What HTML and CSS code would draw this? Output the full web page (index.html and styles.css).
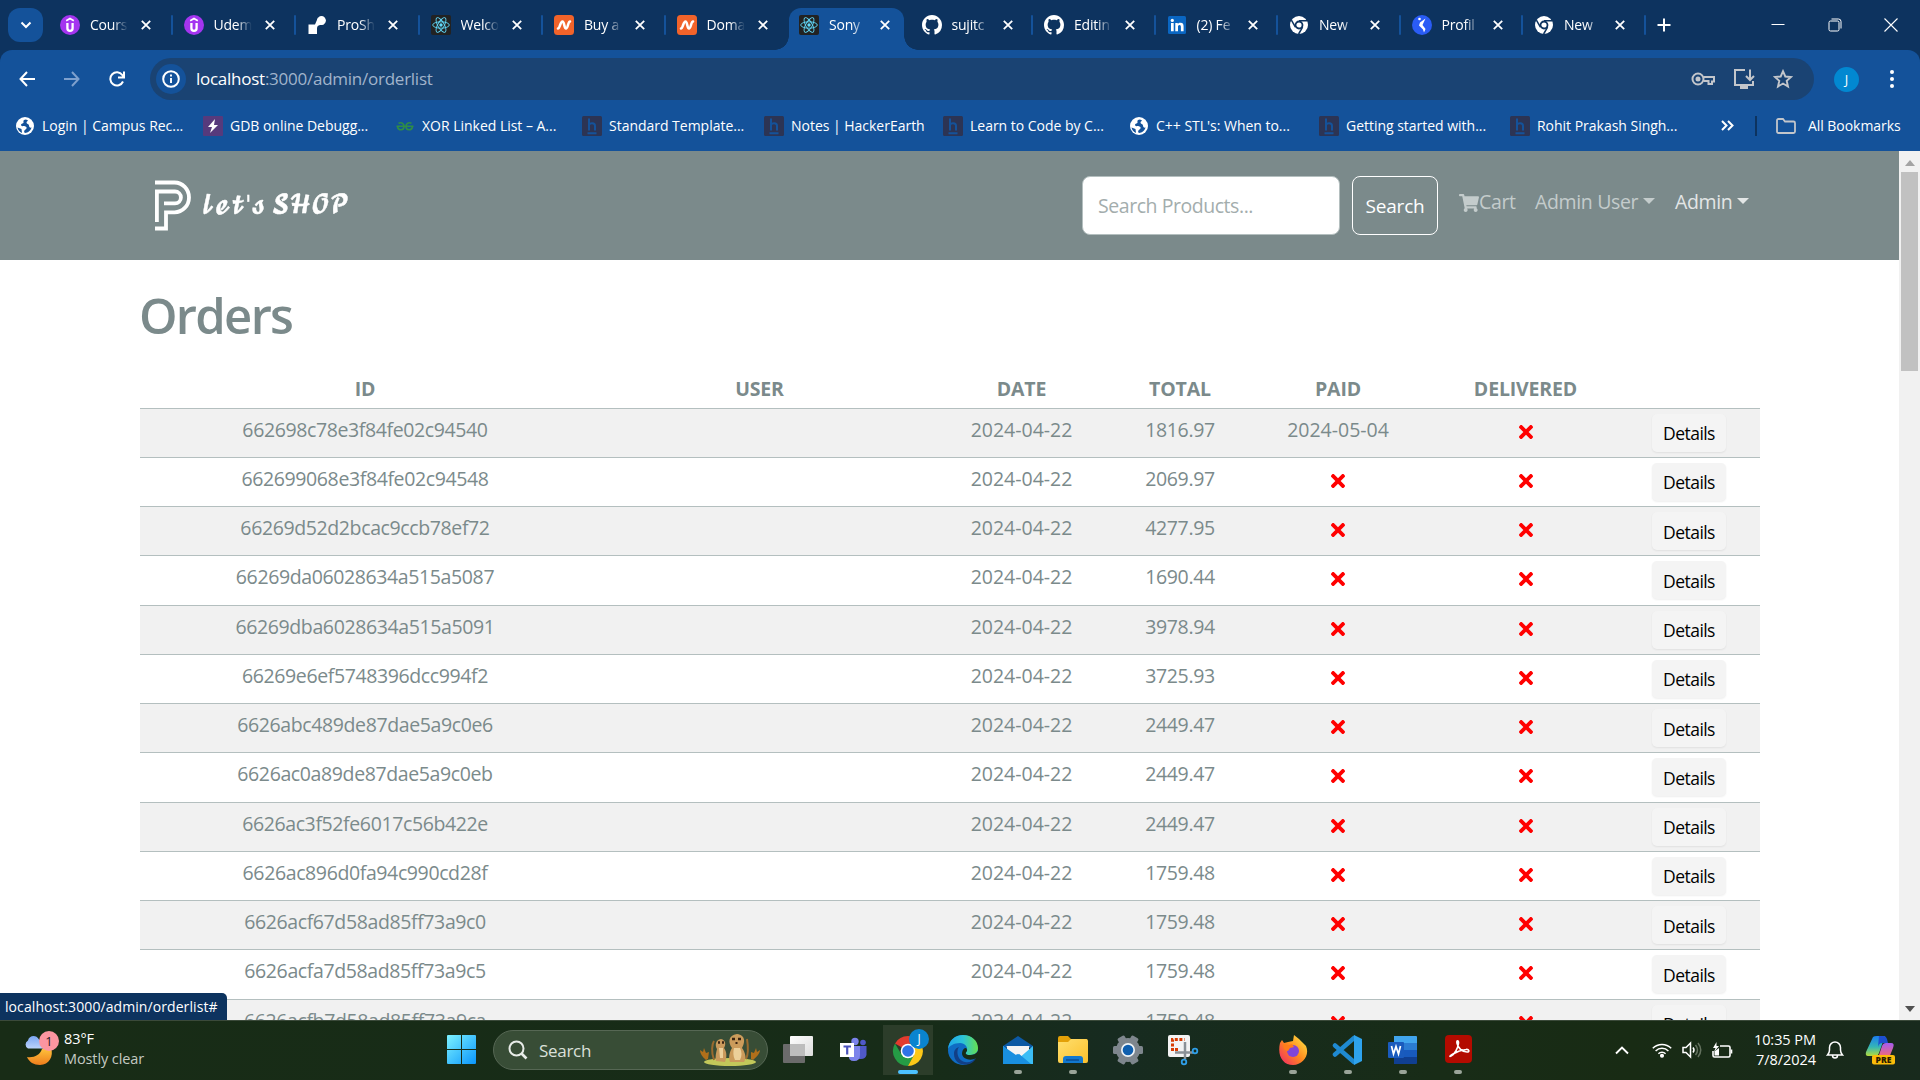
FILE: index.html
```html
<!DOCTYPE html>
<html lang="en">
<head>
<meta charset="utf-8">
<title>Orders</title>
<link rel="stylesheet" href="styles.css">
</head>
<body>
<svg class="defs" width="0" height="0">
  <defs>
    <linearGradient id="g-win" x1="0" y1="0" x2="1" y2="1"><stop offset="0" stop-color="#7df3ff"/><stop offset="1" stop-color="#0a95fb"/></linearGradient>
    <linearGradient id="g-moon" x1="0" y1="0" x2="0" y2="1"><stop offset="0" stop-color="#ffc53d"/><stop offset="1" stop-color="#ee7d1c"/></linearGradient>
    <linearGradient id="g-cloud" x1="0" y1="0" x2="0" y2="1"><stop offset="0" stop-color="#7ba6f2"/><stop offset="1" stop-color="#bcd3fb"/></linearGradient>
    <linearGradient id="g-view" x1="0" y1="0" x2="1" y2="1"><stop offset="0" stop-color="#fff"/><stop offset="1" stop-color="#dcdcdc"/></linearGradient>
    <linearGradient id="g-edge" x1="0" y1="0" x2="1" y2="0"><stop offset="0" stop-color="#1fa7ea"/><stop offset=".5" stop-color="#2cc3d8"/><stop offset="1" stop-color="#66e04e"/></linearGradient>
    <linearGradient id="g-fold" x1="0" y1="0" x2="1" y2="1"><stop offset="0" stop-color="#ffdf6e"/><stop offset="1" stop-color="#fbc02c"/></linearGradient>
    <linearGradient id="g-fox" x1="1" y1="0" x2="0" y2="1"><stop offset="0" stop-color="#fff04a"/><stop offset=".5" stop-color="#ff8a1e"/><stop offset="1" stop-color="#f0206c"/></linearGradient>
    <linearGradient id="g-copl" x1="0" y1="0" x2="0" y2="1"><stop offset="0" stop-color="#1b7df0"/><stop offset=".55" stop-color="#35b6b5"/><stop offset="1" stop-color="#b4dc3a"/></linearGradient>
    <linearGradient id="g-copr" x1="0" y1="0" x2="0" y2="1"><stop offset="0" stop-color="#a45bf0"/><stop offset="1" stop-color="#fb6d6a"/></linearGradient>
  </defs>
  <symbol id="x" viewBox="0 0 10 10"><path d="M.8.8l8.4 8.4M9.2.8L.8 9.2" stroke="#fff" stroke-width="1.8" fill="none"/></symbol>
  <symbol id="udemy" viewBox="0 0 20 20"><circle cx="10" cy="10" r="10" fill="#a435f0"/><path d="M6.2 5.7L10 3.5l3.800 2.200" stroke="#fff" stroke-width="1.700" fill="none"/><path d="M7.400 8v5.200a2.600 2.600 0 0 0 5.200 0V8" stroke="#fff" stroke-width="2.300" fill="none"/></symbol>
  <symbol id="pro" viewBox="0 0 20 20"><circle cx="14.500" cy="5.500" r="4.400" fill="#fff"/><path d="M1.500 9.500h6.500L11 2.500l6 7-4 .5c-2 .3-3 1.500-3 3.500v5.500H1.500z" fill="#fff"/></symbol>
  <symbol id="react" viewBox="0 0 20 20"><rect width="20" height="20" rx="2" fill="#222"/><g fill="none" stroke="#61dafb" stroke-width=".9"><ellipse cx="10" cy="10" rx="8.300" ry="3.200"/><ellipse cx="10" cy="10" rx="8.300" ry="3.200" transform="rotate(60 10 10)"/><ellipse cx="10" cy="10" rx="8.300" ry="3.200" transform="rotate(120 10 10)"/></g><circle cx="10" cy="10" r="1.700" fill="#61dafb"/></symbol>
  <symbol id="cheap" viewBox="0 0 20 20"><rect width="20" height="20" rx="3.500" fill="#f1632a"/><path d="M4 13.500c2 0 2.200-7 4.500-7 2 0 1.500 7 3.500 7S14 6.500 16 6.500" fill="none" stroke="#fff" stroke-width="2.600" stroke-linecap="round"/></symbol>
  <symbol id="github" viewBox="0 0 16 16"><path fill="#fff" d="M8 0C3.580 0 0 3.580 0 8c0 3.540 2.290 6.530 5.470 7.590.4.070.55-.17.55-.38 0-.19-.01-.82-.01-1.490-2.010.37-2.530-.49-2.690-.94-.09-.23-.48-.94-.82-1.130-.28-.15-.68-.52-.01-.53.63-.01 1.080.58 1.230.82.72 1.210 1.870.87 2.330.66.070-.52.28-.87.51-1.070-1.780-.2-3.640-.89-3.640-3.950 0-.87.31-1.590.82-2.150-.08-.2-.36-1.020.08-2.120 0 0 .67-.21 2.200.82.64-.18 1.320-.27 2-.27s1.360.09 2 .27c1.530-1.040 2.200-.82 2.200-.82.44 1.100.16 1.920.08 2.120.51.56.82 1.270.82 2.150 0 3.070-1.870 3.750-3.650 3.950.29.25.54.73.54 1.480 0 1.070-.01 1.930-.01 2.200 0 .21.15.46.55.38A8.010 8.010 0 0 0 16 8c0-4.420-3.580-8-8-8z"/></symbol>
  <symbol id="linkedin" viewBox="0 0 20 20"><rect x="1" y="1" width="18" height="18" rx="1.500" fill="#0a66c2"/><g fill="#fff"><circle cx="5.300" cy="5.400" r="1.600"/><path d="M4 8h2.700v8.200H4zM8.300 8h2.500v1.200c.5-.9 1.500-1.400 2.700-1.400 2.500 0 3.100 1.600 3.100 3.900v4.500h-2.700v-4c0-1.100-.1-2.200-1.400-2.200s-1.500 1-1.500 2.100v4.100H8.300z"/></g></symbol>
  <symbol id="chromew" viewBox="0 0 20 20"><circle cx="10" cy="10" r="9" fill="#fff"/><circle cx="10" cy="10" r="3.500" fill="none" stroke="#0d335f" stroke-width="1.800"/><path d="M10 5.800h8M6.400 12.100L2.400 5.200M13.600 12.100L9.600 19" stroke="#0d335f" stroke-width="1.500"/></symbol>
  <symbol id="prof" viewBox="0 0 20 20"><circle cx="10" cy="10" r="10" fill="#2a5cf5"/><circle cx="7.500" cy="4" r="1.300" fill="#fff"/><path d="M13.500 3.500L8 7.500l-1 3 4 4 1 3 1.500-3.500-3-4z" fill="#fff"/></symbol>
  <symbol id="globe" viewBox="0 0 20 20"><circle cx="10" cy="10" r="9" fill="#fff"/><path d="M11 3.500c-2 0-3 1-2.500 2.500S6 7.500 6 9s3 1 4.500 1.500 1.500 2 0 3-2 2.500-.5 3.500c3-.3 6-2.500 6.500-5.500-1.500.5-2.500-.5-2.500-2S11.500 8 11.500 6.500s1.500-1 1.500-2z M2.500 11.500l4 1.500.5 4c-2.500-1-4-3-4.500-5.500z" fill="#14529a"/></symbol>
  <symbol id="bolt" viewBox="0 0 20 20"><rect width="20" height="20" rx="1" fill="#563a7c"/><path d="M12 3L5 11h4l-2 6 8-8h-4z" fill="#fff"/></symbol>
  <symbol id="gfg" viewBox="0 0 20 20"><path d="M1.500 10.300h17M3.500 7.300C7 5.800 9 8 9 10.500c0 4-5.500 4.500-6.500.5M16.500 7.300C13 5.800 11 8 11 10.500c0 4 5.500 4.500 6.500.5" fill="none" stroke="#2f8d46" stroke-width="1.600"/></symbol>
  <symbol id="he" viewBox="0 0 20 20"><rect width="20" height="20" rx="1.500" fill="#2c3454"/><path d="M7 2.500v12M7 9c.8-2.300 6-2.500 6 .8v4.700M5.500 17.300h9" fill="none" stroke="#14529a" stroke-width="2"/></symbol>
  <symbol id="no" viewBox="0 0 352 352"><path fill="red" d="M242.700 176l100.100-100.100c12.300-12.300 12.300-32.200 0-44.500l-22.200-22.200c-12.300-12.300-32.200-12.300-44.500 0L176 109.300 75.900 9.200c-12.300-12.300-32.200-12.300-44.500 0L9.200 31.500c-12.300 12.300-12.300 32.200 0 44.500L109.300 176 9.200 276.100c-12.300 12.300-12.300 32.200 0 44.500l22.200 22.200c12.300 12.300 32.200 12.300 44.500 0L176 242.700l100.100 100.100c12.300 12.300 32.200 12.300 44.500 0l22.200-22.200c12.300-12.300 12.300-32.200 0-44.500z"/></symbol>
</svg>

<header class="tabstrip">
  <button class="tab-search"><svg width="12" height="8" viewBox="0 0 12 8"><path d="M1.500 1.500L6 6l4.500-4.500" fill="none" stroke="#fff" stroke-width="2"/></svg></button>
  <div class="tabs">
    <div class="tab wide sep"><svg class="fav"><use href="#udemy"/></svg><span>Cours</span><svg class="x"><use href="#x"/></svg></div>
    <div class="tab wide sep"><svg class="fav"><use href="#udemy"/></svg><span>Udem</span><svg class="x"><use href="#x"/></svg></div>
    <div class="tab wide sep"><svg class="fav"><use href="#pro"/></svg><span>ProSh</span><svg class="x"><use href="#x"/></svg></div>
    <div class="tab wide sep"><svg class="fav"><use href="#react"/></svg><span>Welco</span><svg class="x"><use href="#x"/></svg></div>
    <div class="tab sep"><svg class="fav"><use href="#cheap"/></svg><span>Buy a</span><svg class="x"><use href="#x"/></svg></div>
    <div class="tab"><svg class="fav"><use href="#cheap"/></svg><span>Doma</span><svg class="x"><use href="#x"/></svg></div>
    <div class="tab active"><svg class="fav"><use href="#react"/></svg><span>Sony</span><svg class="x"><use href="#x"/></svg></div>
    <div class="tab sep"><svg class="fav"><use href="#github"/></svg><span>sujitc</span><svg class="x"><use href="#x"/></svg></div>
    <div class="tab sep"><svg class="fav"><use href="#github"/></svg><span>Editin</span><svg class="x"><use href="#x"/></svg></div>
    <div class="tab sep"><svg class="fav"><use href="#linkedin"/></svg><span>(2) Fe</span><svg class="x"><use href="#x"/></svg></div>
    <div class="tab sep"><svg class="fav"><use href="#chromew"/></svg><span>New</span><svg class="x"><use href="#x"/></svg></div>
    <div class="tab sep"><svg class="fav"><use href="#prof"/></svg><span>Profil</span><svg class="x"><use href="#x"/></svg></div>
    <div class="tab sep"><svg class="fav"><use href="#chromew"/></svg><span>New</span><svg class="x"><use href="#x"/></svg></div>
  </div>
  <svg class="newtab" width="14" height="14" viewBox="0 0 14 14"><path d="M7 .5v13M.5 7h13" stroke="#fff" stroke-width="2"/></svg>
  <div class="winctl">
    <svg width="14" height="14" viewBox="0 0 14 14"><path d="M.5 6.500h13" stroke="#fff"/></svg>
    <svg width="14" height="14" viewBox="0 0 14 14" fill="none" stroke="#fff"><rect x="1" y="3" width="10" height="10" rx="1.500"/><path d="M3.500 1h7a2.500 2.500 0 0 1 2.500 2.500v7"/></svg>
    <svg width="14" height="14" viewBox="0 0 14 14"><path d="M.5.5l13 13M13.500.5l-13 13" stroke="#fff" stroke-width="1.100"/></svg>
  </div>
</header>

<div class="browserbar">
  <div class="toolbar">
    <div class="navbtns">
      <svg width="16" height="16" viewBox="0 0 16 16" fill="none" stroke="#fff" stroke-width="2"><path d="M8 1L1.500 8 8 15M1.500 8H16"/></svg>
      <svg width="16" height="16" viewBox="0 0 16 16" fill="none" stroke="#7ea0cd" stroke-width="2"><path d="M8 1l6.500 7L8 15M14.500 8H0"/></svg>
      <svg width="16" height="16" viewBox="0 0 16 16" fill="none" stroke="#fff" stroke-width="2"><path d="M14 10.500A6.600 6.600 0 1 1 13.300 4L14.500 6M15 .5V6.500H9"/></svg>
    </div>
    <div class="omnibox">
      <div class="info"><svg width="18" height="18" viewBox="0 0 18 18"><circle cx="9" cy="9" r="7.800" fill="none" stroke="#fff" stroke-width="2"/><path d="M9 8v5M9 4.500v2" stroke="#fff" stroke-width="1.900"/></svg></div>
      <span class="url"><b>localhost</b>:3000/admin/orderlist</span>
      <div class="omni-icons">
        <svg width="24" height="16" viewBox="0 0 24 16" fill="none" stroke="#c3c6cb" stroke-width="2"><circle cx="7" cy="8" r="5.500"/><path d="M12.500 6H23v4.500h-2V13h-3.500v-3h-5"/><circle cx="7" cy="8" r="1.500" fill="#c3c6cb"/></svg>
        <svg width="22" height="22" viewBox="0 0 22 22" fill="none" stroke="#c3c6cb" stroke-width="2"><path d="M12 2H2v15h18v-4M17 1.500v10M13 8l4 4 4-4"/><path d="M7 19.500h8" stroke-width="3"/></svg>
        <svg width="20" height="20" viewBox="0 0 20 20" fill="none" stroke="#c3c6cb" stroke-width="1.900"><path d="M10 2.200l2.300 5.300 5.700.5-4.300 3.800 1.300 5.700-5-3-5 3 1.300-5.700L2 8l5.700-.5z"/></svg>
      </div>
    </div>
    <div class="avatar">J</div>
    <svg class="dots" width="4" height="22" viewBox="0 0 4 22" fill="#fff"><circle cx="2" cy="4" r="2"/><circle cx="2" cy="11" r="2"/><circle cx="2" cy="18" r="2"/></svg>
  </div>
  <div class="bookmarks">
    <div class="bm"><svg><use href="#globe"/></svg><span>Login | Campus Rec...</span></div>
    <div class="bm"><svg><use href="#bolt"/></svg><span>GDB online Debugg...</span></div>
    <div class="bm"><svg><use href="#gfg"/></svg><span>XOR Linked List – A...</span></div>
    <div class="bm"><svg><use href="#he"/></svg><span>Standard Template...</span></div>
    <div class="bm"><svg><use href="#he"/></svg><span>Notes | HackerEarth</span></div>
    <div class="bm"><svg><use href="#he"/></svg><span>Learn to Code by C...</span></div>
    <div class="bm"><svg><use href="#globe"/></svg><span>C++ STL's: When to...</span></div>
    <div class="bm"><svg><use href="#he"/></svg><span>Getting started with...</span></div>
    <div class="bm"><svg><use href="#he"/></svg><span>Rohit Prakash Singh...</span></div>
    <svg class="more" width="13" height="11" viewBox="0 0 13 11" fill="none" stroke="#fff" stroke-width="2"><path d="M1 1l4.500 4.500L1 10M7 1l4.500 4.500L7 10"/></svg>
    <i class="bm-sep"></i>
    <svg class="folder" width="20" height="16" viewBox="0 0 20 16" fill="none" stroke="#c3c6cb" stroke-width="1.800"><path d="M1 2.500Q1 1 2.500 1H7l2 2.500h8.500q1.500 0 1.500 1.500v8.500q0 1.500-1.500 1.500h-15Q1 15 1 13.500z"/></svg>
    <span class="all">All Bookmarks</span>
  </div>
</div>

<div class="viewport">
  <main class="page">
    <nav class="navbar">
      <a class="brand">
        <svg width="37" height="51" viewBox="0 0 37 51" fill="none" stroke="#fff" stroke-width="3.800"><path d="M0 2.500H19.500A14.500 14.900 0 0 1 19.500 32.300H11V48.500H0"/><path d="M1.900 42V11.500H20a5.900 5.900 0 0 1 0 11.800H9"/></svg>
        <span>𝓵𝓮𝓽'𝓼 𝓢𝓗𝓞𝓟</span>
      </a>
      <div class="nav-right">
        <input class="q" type="text" placeholder="Search Products...">
        <button class="search">Search</button>
        <a class="link cart"><svg width="20" height="18" viewBox="0 0 576 512" fill="currentColor"><path d="M528.100 301.300l47.300-208C578.800 78.300 567.400 64 552 64H159.200l-9.200-44.800C147.800 8 137.900 0 126.500 0H24C10.700 0 0 10.700 0 24v16c0 13.300 10.700 24 24 24h69.900l70.200 343.400C147.300 417.100 136 435.200 136 456c0 30.900 25.100 56 56 56s56-25.100 56-56c0-15.700-6.400-29.800-16.800-40h209.600C430.400 426.200 424 440.300 424 456c0 30.900 25.100 56 56 56s56-25.100 56-56c0-22.200-12.900-41.300-31.600-50.400l5.500-24.300c3.400-15-8-29.300-23.400-29.300H218.100l-6.500-32h293.100c11.200 0 20.900-7.800 23.400-18.700z"/></svg><span>Cart</span></a>
        <a class="link user"><span>Admin User</span><i class="caret"></i></a>
        <a class="link admin"><span>Admin</span><i class="caret"></i></a>
      </div>
    </nav>
    <section class="content">
      <h1>Orders</h1>
      <table class="orders">
        <colgroup><col class="c1"><col class="c2"><col class="c3"><col class="c4"><col class="c5"><col class="c6"><col class="c7"></colgroup>
        <thead><tr><th>ID</th><th>USER</th><th>DATE</th><th>TOTAL</th><th>PAID</th><th>DELIVERED</th><th></th></tr></thead>
        <tbody>
          <tr><td class="id">662698c78e3f84fe02c94540</td><td></td><td>2024-04-22</td><td class="num">1816.97</td><td>2024-05-04</td><td><svg class="no"><use href="#no"/></svg></td><td><button class="details">Details</button></td></tr>
          <tr><td class="id">662699068e3f84fe02c94548</td><td></td><td>2024-04-22</td><td class="num">2069.97</td><td><svg class="no"><use href="#no"/></svg></td><td><svg class="no"><use href="#no"/></svg></td><td><button class="details">Details</button></td></tr>
          <tr><td class="id">66269d52d2bcac9ccb78ef72</td><td></td><td>2024-04-22</td><td class="num">4277.95</td><td><svg class="no"><use href="#no"/></svg></td><td><svg class="no"><use href="#no"/></svg></td><td><button class="details">Details</button></td></tr>
          <tr><td class="id">66269da06028634a515a5087</td><td></td><td>2024-04-22</td><td class="num">1690.44</td><td><svg class="no"><use href="#no"/></svg></td><td><svg class="no"><use href="#no"/></svg></td><td><button class="details">Details</button></td></tr>
          <tr><td class="id">66269dba6028634a515a5091</td><td></td><td>2024-04-22</td><td class="num">3978.94</td><td><svg class="no"><use href="#no"/></svg></td><td><svg class="no"><use href="#no"/></svg></td><td><button class="details">Details</button></td></tr>
          <tr><td class="id">66269e6ef5748396dcc994f2</td><td></td><td>2024-04-22</td><td class="num">3725.93</td><td><svg class="no"><use href="#no"/></svg></td><td><svg class="no"><use href="#no"/></svg></td><td><button class="details">Details</button></td></tr>
          <tr><td class="id">6626abc489de87dae5a9c0e6</td><td></td><td>2024-04-22</td><td class="num">2449.47</td><td><svg class="no"><use href="#no"/></svg></td><td><svg class="no"><use href="#no"/></svg></td><td><button class="details">Details</button></td></tr>
          <tr><td class="id">6626ac0a89de87dae5a9c0eb</td><td></td><td>2024-04-22</td><td class="num">2449.47</td><td><svg class="no"><use href="#no"/></svg></td><td><svg class="no"><use href="#no"/></svg></td><td><button class="details">Details</button></td></tr>
          <tr><td class="id">6626ac3f52fe6017c56b422e</td><td></td><td>2024-04-22</td><td class="num">2449.47</td><td><svg class="no"><use href="#no"/></svg></td><td><svg class="no"><use href="#no"/></svg></td><td><button class="details">Details</button></td></tr>
          <tr><td class="id">6626ac896d0fa94c990cd28f</td><td></td><td>2024-04-22</td><td class="num">1759.48</td><td><svg class="no"><use href="#no"/></svg></td><td><svg class="no"><use href="#no"/></svg></td><td><button class="details">Details</button></td></tr>
          <tr><td class="id">6626acf67d58ad85ff73a9c0</td><td></td><td>2024-04-22</td><td class="num">1759.48</td><td><svg class="no"><use href="#no"/></svg></td><td><svg class="no"><use href="#no"/></svg></td><td><button class="details">Details</button></td></tr>
          <tr><td class="id">6626acfa7d58ad85ff73a9c5</td><td></td><td>2024-04-22</td><td class="num">1759.48</td><td><svg class="no"><use href="#no"/></svg></td><td><svg class="no"><use href="#no"/></svg></td><td><button class="details">Details</button></td></tr>
          <tr><td class="id">6626acfb7d58ad85ff73a9ca</td><td></td><td>2024-04-22</td><td class="num">1759.48</td><td><svg class="no"><use href="#no"/></svg></td><td><svg class="no"><use href="#no"/></svg></td><td><button class="details">Details</button></td></tr>
        </tbody>
      </table>
    </section>
  </main>
  <div class="scrollbar">
    <i class="up"></i><i class="thumb"></i><i class="down"></i>
  </div>
  <div class="status">localhost:3000/admin/orderlist#</div>
</div>

<footer class="taskbar">
  <div class="weather">
    <svg width="36" height="38" viewBox="0 0 36 38"><path d="M3 27c7 1 13-2 15-8l9-1c3 8-2 17-11 17-6 0-11-3-13-8z" fill="url(#g-moon)"/><path d="M4 18.500a4.500 4.500 0 0 1 0-8c1-5 8-6.500 11-1l5 3v6z" fill="url(#g-cloud)"/><circle cx="25" cy="11" r="10" fill="#fc95a0"/><text x="25" y="16" text-anchor="middle" class="wx-n">1</text></svg>
    <div class="wx"><span>83°F</span><span class="dim">Mostly clear</span></div>
  </div>
  <svg class="start" width="30" height="30" viewBox="0 0 30 30"><path d="M1 0h13v14H0V1q0-1 1-1zM15 0h13q1 0 1 1v13H15zM0 15h14v14H1q-1 0-1-1zM15 15h14v13q0 1-1 1H15z" fill="url(#g-win)"/></svg>
  <div class="tsearch">
    <svg width="20" height="20" viewBox="0 0 20 20" fill="none" stroke="#e8ece8" stroke-width="2"><circle cx="8.500" cy="8.500" r="7"/><path d="M13.500 13.500l5 5" stroke-width="2.600"/></svg>
    <span>Search</span>
    <svg class="meer" width="62" height="32" viewBox="0 0 62 32"><ellipse cx="31" cy="28" rx="26" ry="4" fill="#c3c85a"/><path d="M7 26c-4-3-6-7-6-10l3 2 1-4 2 5 3-1-1 7zM54 26c4-3 7-7 7-10l-3 2-1-4-2 5-3-1 0 7z" fill="#b06f1a"/><path d="M15 26C12 18 13 10 15 7M47 25c3-6 2-14 1-20" fill="none" stroke="#9a6a2e" stroke-width="2"/><path d="M17 27c-1-4 0-8 1-12-2-3-2-9 4-10 5 1 5 6 3 9 3 4 3 9 1 14z" fill="#c99a5c"/><path d="M31 28c-2-5 0-11 2-14-4-5-4-13 5-14 9 1 8 9 5 14 3 4 5 10 2 14z" fill="#cb9b5b"/><path d="M35 14h6c2 4 2 8 0 12h-5c-2-4-2-8-1-12zM20 14h4v10h-3z" fill="#ecd09a"/><path d="M33 5h3M39 5h3M19 8.500h2M23 8.500h2" stroke="#3b2412" stroke-width="2.400"/><path d="M37.500 8v2" stroke="#3b2412" stroke-width="2"/></svg>
  </div>
  <div class="apps">
    <div class="app"><svg width="32" height="32" viewBox="0 0 32 32"><rect x="1" y="10" width="22" height="19" rx="1" fill="#6b6b6b"/><rect x="8" y="2" width="23" height="20" rx="1" fill="url(#g-view)"/><path d="M8 10h15v12H8z" fill="#bdbdbd"/></svg></div>
    <div class="app"><svg width="32" height="32" viewBox="0 0 32 32"><circle cx="18" cy="7.500" r="3.700" fill="#7b83eb"/><circle cx="26" cy="8.500" r="2.800" fill="#5059c9"/><path d="M20 12h9.500v9q-1 4-5.500 4h-4z" fill="#5059c9"/><path d="M12 12h11v9q0 6-6 6t-5-6z" fill="#7b83eb"/><rect x="3" y="9" width="14" height="14" fill="#fff"/><path d="M6.500 12.500h7.500M10.200 13v7.500" stroke="#4b53bc" stroke-width="2.200"/></svg></div>
    <div class="app on"><svg width="32" height="32" viewBox="0 0 32 32"><path d="M16 17L3 9.500A15 15 0 0 1 29 9.500z" fill="#e33b2e"/><path d="M22.500 20.500L16 32A15 15 0 0 1 3 9.500L9.500 20.500z" fill="#259b45"/><path d="M16 10h13.200A15 15 0 0 1 16 32l6-11z" fill="#fdc818"/><circle cx="16" cy="17" r="7.300" fill="#fff"/><circle cx="16" cy="17" r="5.800" fill="#2f74e8"/></svg><b class="pj">J</b></div>
    <div class="app"><svg width="32" height="32" viewBox="0 0 32 32"><circle cx="16" cy="16" r="15" fill="#0f6cc4"/><path d="M1 15C2 6 8 1 16 1c9 0 15 6 15 13 0 5-4 7-8 7-5 0-5-2-3-4 1-4-2-8-7-8C7 9 2 12 1 15z" fill="url(#g-edge)"/><path d="M12 13c-3 4-2 13 6 15 4 1 8-1 11-4-4 10-22 9-22-4 0-4 2-6 5-7z" fill="#123f86"/><path d="M20 17c-2 2-2 4 3 4 3 0 6-1 8-4v6l-2 1c-4 3-13 2-14-4 0-3 1-5 3-6 2 0 2 1 2 3z" fill="#182c16"/></svg></div>
    <div class="app run"><svg width="32" height="32" viewBox="0 0 32 32"><path d="M1 12L16 2l15 10v2H1z" fill="#0c59a4"/><path d="M5 12h22v14H5z" fill="#f4f4f4"/><path d="M1 12l15 13L31 12v18H1z" fill="#3bbdf5"/><path d="M1 12v18h28L16 19l-2 2z" fill="#198fe0"/><path d="M4 12h24L16 20.500z" fill="#f4f4f4"/></svg></div>
    <div class="app run"><svg width="32" height="32" viewBox="0 0 32 32"><path d="M1 4q0-2 2-2h8l3 3h16v8H1z" fill="#e3a008"/><path d="M1 8h10l3-3h15q2 0 2 2v20q0 2-2 2H3q-2 0-2-2z" fill="url(#g-fold)"/><path d="M6 29v-4q0-3 3-3h14q3 0 3 3v4z" fill="#1278cf"/><path d="M9 26h13" stroke="#0b4c93" stroke-width="1.500"/></svg></div>
    <div class="app"><svg width="32" height="32" viewBox="0 0 32 32"><g fill="#7e868d"><circle cx="16" cy="16" r="12"/><rect x="1" y="12" width="30" height="8" rx="1.500"/><rect x="1" y="12" width="30" height="8" rx="1.500" transform="rotate(60 16 16)"/><rect x="1" y="12" width="30" height="8" rx="1.500" transform="rotate(120 16 16)"/></g><circle cx="16" cy="16" r="7" fill="#eef3f7"/><circle cx="16" cy="16" r="5.300" fill="#0f5fae"/></svg></div>
    <div class="app"><svg width="32" height="32" viewBox="0 0 32 32"><rect x="1" y="1" width="22" height="22" rx="2" fill="#f3f3f3"/><path d="M5.500 17V5.500h12" fill="none" stroke="#d83b01" stroke-width="3" stroke-dasharray="3 1.600"/><path d="M4 15.500h7" stroke="#d83b01" stroke-width="2.800" stroke-dasharray="3 1"/><path d="M18 8v17M8 18.500h18" stroke="#8a9096" stroke-width="2.500"/><circle cx="28" cy="17" r="2.300" fill="none" stroke="#2f9fe8" stroke-width="1.800"/><circle cx="17" cy="28" r="2.300" fill="none" stroke="#2f9fe8" stroke-width="1.800"/></svg></div>
    <div class="app"></div>
    <div class="app run"><svg width="32" height="32" viewBox="0 0 32 32"><path d="M3 9l2-3 2 3 4-1 5-1 1-6 5 4 3 3 4 4c4 9-3 19-13 19S0 22 3 9z" fill="url(#g-fox)"/><circle cx="16" cy="17" r="6" fill="#8045d8"/><path d="M6 10l6 1 3-1 2 3-4 1-2 3c-3 0-5-3-5-7z" fill="#ff7d1a"/></svg></div>
    <div class="app run"><svg width="32" height="32" viewBox="0 0 32 32"><path d="M3 20.500L22 4M3 11.500L22 28" stroke="#1f8ad2" stroke-width="4.500" stroke-linecap="round"/><path d="M22 1l8 4v22l-8 4z" fill="#2ea3ee"/></svg></div>
    <div class="app run"><svg width="32" height="32" viewBox="0 0 32 32"><path d="M7 2h22q1 0 1 1v6H7z" fill="#41a5ee"/><path d="M7 9h23v7H7z" fill="#2b7cd3"/><path d="M7 16h23v7H7z" fill="#185abd"/><path d="M7 23h23v6q0 1-1 1H7z" fill="#103f91"/><rect x="1" y="8" width="16" height="16" rx="1" fill="#1a5bbd"/><path d="M4.500 12l2 8L9 12.500l2.500 7.500 2-8" fill="none" stroke="#fff" stroke-width="1.700"/></svg></div>
    <div class="app run"><svg width="32" height="32" viewBox="0 0 32 32"><rect x="3" y="1" width="27" height="28" rx="4" fill="#b30b00"/><path d="M9 22c4-2 7-8 7.500-13 0-3-2-3-1.500 0 1 5 5 9 10 9 3 0 2-3-1-2.500-5 .5-9 2-13 4.500-3 2-4 3-2 2z" fill="none" stroke="#fff" stroke-width="1.700"/></svg></div>
  </div>
  <div class="tray">
    <svg class="t-up" width="14" height="9" viewBox="0 0 14 9"><path d="M1 7.500l6-6 6 6" fill="none" stroke="#fff" stroke-width="1.900"/></svg>
    <svg class="t-wifi" width="20" height="16" viewBox="0 0 20 16" fill="none" stroke="#fff" stroke-width="1.500"><path d="M.8 6.200a13 13 0 0 1 18.400 0M3.600 9a9 9 0 0 1 12.800 0M6.400 11.700a5 5 0 0 1 7.200 0"/><circle cx="10" cy="13.800" r="1.300" fill="#fff"/></svg>
    <svg class="t-vol" width="20" height="18" viewBox="0 0 20 18" fill="none" stroke="#fff" stroke-width="1.500"><path d="M1 6.500h3L8.500 2v14L4 11.500H1zM11 6.500q2 2.500 0 5"/><path d="M13.500 4q4 5 0 10M16 2q5.500 7 0 14" stroke="#64725f"/></svg>
    <svg class="t-bat" width="21" height="17" viewBox="0 0 21 17" fill="none" stroke="#fff" stroke-width="1.600"><path d="M8 4h8.500q1.500 0 1.500 1.500v8q0 1.500-1.500 1.500h-14Q1 15 1 13.500V9"/><path d="M2.500 13.500V9.500L7 6v7.500zM4.500 0L1 6h2.500L2 10l5-6H4.500z" fill="#fff" stroke="none"/><path d="M19.500 7.500v4"/></svg>
    <div class="clock"><span>10:35 PM</span><span>7/8/2024</span></div>
    <svg class="t-bell" width="18" height="20" viewBox="0 0 18 20" fill="none" stroke="#fff" stroke-width="1.500"><path d="M1.500 15c1.500-1.500 2-3 2-5V7.500a5.500 5.500 0 0 1 11 0V10c0 2 .5 3.500 2 5zM6.500 15.500a2.500 2.500 0 0 0 5 0"/></svg>
    <svg class="t-cop" width="30" height="30" viewBox="0 0 30 30"><path d="M8 2Q9 1 12 1h8l-6 17q-1 3-4 3H3Q0 21 1 17z" fill="url(#g-copl)"/><path d="M14 1h5q2 0 3 3l1 4h-6q-3 0-4 4z" fill="#1d4fd0"/><path d="M17 11q1-3 4-3h5q4 0 2 5l-4 10H13z" fill="url(#g-copr)"/><rect x="7" y="20" width="23" height="9.500" rx="2" fill="#fbbc09"/><text x="18.500" y="28" text-anchor="middle" class="pre">PRE</text></svg>
  </div>
</footer>
</body>
</html>
```
FILE: styles.css
```css
* { box-sizing: border-box; }
body {
  margin: 0; width: 1920px; height: 1080px; overflow: hidden;
  display: flex; flex-direction: column;
  font-family: "Open Sans", "Noto Sans", sans-serif;
  background: #fff;
}
svg { display: block; flex: none; }
.defs { position: absolute; }
button, input { font-family: inherit; margin: 0; }

/* tab strip */
.tabstrip { height: 50px; flex: none; background: #0d335f; display: flex; align-items: center; padding-left: 8px; }
.tab-search { width: 35px; height: 34px; border: 0; border-radius: 12px; background: #14529a; display: flex; align-items: center; justify-content: center; padding: 0; }
.tabs { display: flex; margin-left: 5px; align-self: stretch; padding-top: 8px; }
.tab { width: 122.5px; height: 42px; display: flex; align-items: center; padding: 0 14px 8px 12px; position: relative; }
.tab.wide { width: 123.5px; }
.fav { width: 20px; height: 20px; }
.tab span { width: 38px; margin-left: 10px; font-size: 14px; line-height: 20px; letter-spacing: -.2px; color: #fff; white-space: nowrap; overflow: hidden; -webkit-mask-image: linear-gradient(90deg, #000 60%, transparent); mask-image: linear-gradient(90deg, #000 60%, transparent); }
.x { width: 10px; height: 10px; margin-left: 13px; }
.tab.sep::after { content: ""; position: absolute; right: -1px; top: 7px; width: 2px; height: 20px; background: #14529a; border-radius: 1px; }
.tab.active::before { content: ""; position: absolute; inset: 0 6px 0 2px; background: #14529a; border-radius: 12px 12px 0 0; }
.tab.active::after { content: ""; position: absolute; left: -12px; right: -8px; bottom: 0; height: 14px; background: radial-gradient(circle at 0 0, transparent 13.5px, #14529a 14px) left / 14px 14px no-repeat, radial-gradient(circle at 100% 0, transparent 13.5px, #14529a 14px) right / 14px 14px no-repeat; }
.tab > * { position: relative; z-index: 1; }
.newtab { margin-left: 12px; }
.winctl { margin-left: auto; display: flex; gap: 42.500px; padding-right: 22px; }

/* toolbar */
.browserbar { height: 101px; flex: none; background: #0d335f; }
.toolbar { height: 58px; background: #14529a; border-radius: 12px 12px 0 0; display: flex; align-items: center; padding: 8px 26px 8px 19px; }
.navbtns { display: flex; gap: 29px; width: 131px; }
.omnibox { width: 1665px; height: 42px; border-radius: 21px; background: #1a4373; display: flex; align-items: center; padding: 0 21px 0 6px; }
.info { width: 30px; height: 30px; border-radius: 50%; background: #14529a; display: grid; place-items: center; }
.url { margin-left: 10px; font-size: 17px; letter-spacing: -.25px; line-height: 24px; color: #a1b4cc; }
.url b { font-weight: 400; color: #fff; }
.omni-icons { margin-left: auto; display: flex; align-items: center; gap: 18px; }
.avatar { width: 25px; height: 25px; border-radius: 50%; background: #0288d1; color: #fff; font-size: 13px; line-height: 25px; text-align: center; margin-left: 20px; }
.dots { margin-left: 31px; }
.bookmarks { height: 43px; background: #14529a; display: grid; grid-template-columns: 188px 192px 187px 182px 179px 186px 190px 191px 210px 34px 21px 32px auto; align-items: center; padding: 0 0 8px 16px; color: #fff; font-size: 14px; white-space: nowrap; }
.bm { display: flex; align-items: center; }
.bm svg { width: 20px; height: 20px; margin-right: 7px; margin-left: -1px; }
.bm span { letter-spacing: -.02px; line-height: 20px; }
.all { letter-spacing: -.05px; line-height: 20px; }
.bm-sep { width: 2px; height: 20px; background: #0d335f; justify-self: start; }

/* page */
.viewport { height: 869px; flex: none; display: flex; position: relative; overflow: hidden; }
.page { width: 1899px; }
.navbar { height: 109px; background: #7b8a8b; padding: 25px 148px 25px 155px; display: flex; justify-content: space-between; }
.brand { display: flex; align-items: center; color: #fff; height: 59px; }
.brand span { margin-left: 10px; font: 25px/30px "DejaVu Math TeX Gyre", "DejaVu Serif", serif; white-space: nowrap; transform: scaleX(.81); transform-origin: 0 50%; -webkit-text-stroke: .5px #fff; }
.nav-right { display: flex; align-items: flex-start; }
.q { width: 258px; height: 59px; border: 1px solid #b4bfbf; border-radius: 8px; padding: 0 15px; font-size: 19.500px; background: #fff; }
.q::placeholder { color: #a3adad; letter-spacing: -.45px; }
.search { width: 86px; height: 59px; margin-left: 12px; padding: 0; border: 1px solid #fff; border-radius: 8px; background: transparent; color: #fff; font-size: 19px; letter-spacing: -.2px; }
.link { display: flex; align-items: center; height: 27px; margin-top: 12px; font-size: 19.500px; color: #c4cccc; white-space: nowrap; letter-spacing: -.35px; }
.cart { margin-left: 21px; width: 76px; }
.cart svg { margin-top: 3px; }
.user { width: 140px; }
.admin { width: 76px; color: #e3e6e6; }
.caret { border: 6px solid transparent; border-top-color: currentColor; border-bottom: 0; margin-left: 5px; margin-top: -2px; }
.content { padding: 28px 0 0 140px; width: 1760px; }
h1 { margin: 0; font-size: 49px; line-height: 54px; font-weight: 600; color: #7b8a8b; letter-spacing: -1.7px; margin-left: -1px; }
.orders { width: 1620px; table-layout: fixed; border-collapse: collapse; margin-top: 25px; color: #7b8a8b; font-size: 19.500px; text-align: center; }
.c1 { width: 450px; } .c2 { width: 339px; } .c3 { width: 185px; } .c4 { width: 132px; } .c5 { width: 184px; } .c6 { width: 191px; } .c7 { width: 139px; }
th { height: 41px; padding: 4px 0 0; font-weight: 700; letter-spacing: -.15px; font-size: 19.500px; line-height: 30px; }
td { height: 49.250px; padding: 6px 0 0; vertical-align: top; line-height: 30px; border-top: 1px solid #b4bfbf; }
.id { letter-spacing: -.38px; }
.num { letter-spacing: -.35px; }
tbody tr:nth-child(odd) { background: #f1f1f1; }
.no { width: 14px; height: 14px; margin: 10px auto 0; }
.details { display: block; width: 74px; height: 38px; margin: -1px auto 0 31px; border: 0; border-radius: 5px; background: #f4f4f4; color: #000; font-size: 17.500px; letter-spacing: -.55px; padding: 1px 0 0; box-shadow: 0 1px 2px rgba(0,0,0,.07); }
.scrollbar { width: 21px; background: #f1f1f1; display: flex; flex-direction: column; align-items: center; padding: 9px 0 8px; }
.up, .down { border: 5px solid transparent; }
.up { border-bottom-color: #a3a3a3; border-top: 0; border-bottom-width: 6px; }
.down { border-top: 6px solid #505050; border-bottom: 0; margin-top: auto; }
.thumb { width: 17px; height: 199px; margin-top: 6px; background: #c1c1c1; }
.status { position: absolute; left: 0; bottom: 0; width: 227px; height: 27px; background: #0d335f; border-radius: 0 5px 0 0; color: #fff; font-size: 14px; letter-spacing: .08px; line-height: 27px; padding-left: 5px; white-space: nowrap; }

/* taskbar */
.taskbar { height: 60px; flex: none; background: linear-gradient(90deg, #182c16 0, #172c18 48%, #172b20 58%, #182c17 75%, #182b14 85%, #182a1d); border-top: 1px solid #3b4a3a; padding-bottom: 1px; display: flex; align-items: center; color: #fff; }
.weather { width: 447px; display: flex; align-items: center; padding: 0 0 2px 24px; font-size: 14.500px; }
.wx { display: flex; flex-direction: column; line-height: 20px; margin-left: 4px; letter-spacing: -.1px; }
.dim { color: #c4cac3; }
.wx-n { font-size: 13px; fill: #2c1a1c; }
.tsearch { width: 275px; height: 40px; margin-left: 16px; border: 1px solid #566754; border-radius: 20px; background: #384d36; display: flex; align-items: center; padding: 0 6px 0 14px; font-size: 17px; letter-spacing: -.3px; color: #dbe0da; }
.tsearch span { margin-left: 11px; }
.meer { margin-left: auto; }
.apps { display: flex; margin-left: 2px; }
.app { width: 55px; height: 50px; display: grid; place-items: center; position: relative; }
.app.on { background: #2c3d2a; background-clip: content-box; padding: 0 2.500px; }
.app.run::after, .app.on::after { content: ""; position: absolute; left: 23.500px; bottom: 1px; width: 8px; height: 4px; border-radius: 2px; background: #9aa499; }
.app.on::after { left: 18px; width: 20px; background: #4cc2ff; }
.pj { position: absolute; left: 29px; top: 4px; width: 20px; height: 20px; border-radius: 50%; background: #0a84cf; font: 12px/20px "Open Sans", sans-serif; text-align: center; }
.tray { flex: 1; display: flex; align-items: center; padding-left: 130px; }
.t-wifi { margin-left: 23px; }
.t-vol { margin-left: 10px; }
.t-bat { margin-left: 10px; }
.clock { width: 83px; display: flex; flex-direction: column; text-align: right; font-size: 14.500px; letter-spacing: -.05px; line-height: 20px; padding-bottom: 1px; }
.t-bell { margin-left: 10px; }
.t-cop { margin-left: 21px; }
.pre { font-size: 8.500px; font-weight: 800; fill: #2a1d00; }
```
